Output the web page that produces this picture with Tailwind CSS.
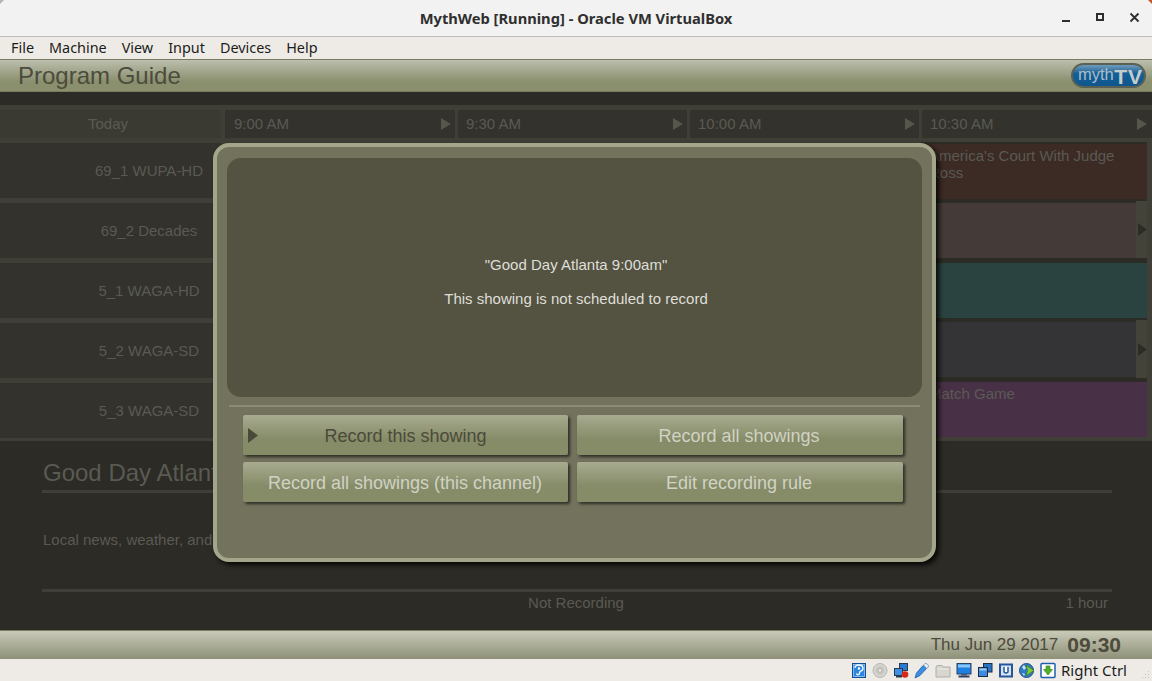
<!DOCTYPE html>
<html><head><meta charset="utf-8"><script src="https://cdn.jsdelivr.net/npm/@tailwindcss/browser@4"></script></head>
<body class="w-[1152px] h-[681px] overflow-hidden font-['Liberation_Sans',sans-serif] bg-[#2c2b25]">
<div class="relative flex flex-col h-[681px]">
  <!-- window title -->
  <header class="h-[37px] shrink-0 flex items-center bg-[#f2f2f2] border-b border-[#bdbcb8] relative">
    <svg class="absolute left-0 top-0" width="5" height="5" viewBox="0 0 5 5"><path d="M0 0h4L0 4z" fill="#b5b5b2"/></svg>
    <svg class="absolute right-0 top-0" width="5" height="5" viewBox="0 0 5 5"><path d="M1 0h4v4z" fill="#c4562c"/></svg>
    <div class="flex-1 text-center text-[14.7px] leading-[20px] pb-[1px] font-bold text-[#2f2f2f] font-['Noto_Sans',sans-serif]">MythWeb [Running] - Oracle VM VirtualBox</div>
    <div class="absolute right-[12px] top-[12px] flex gap-[23px] items-center">
      <svg width="11" height="11" viewBox="0 0 11 11"><rect x="1" y="8" width="8" height="2" fill="#2e2e2e"/></svg>
      <svg width="11" height="11" viewBox="0 0 11 11"><rect x="2" y="2" width="6" height="6" fill="none" stroke="#2e2e2e" stroke-width="2"/></svg>
      <svg width="11" height="11" viewBox="0 0 11 11"><path d="M1.500 1.500l8 8M9.500 1.500l-8 8" stroke="#2e2e2e" stroke-width="1.800"/></svg>
    </div>
  </header>
  <!-- menu -->
  <nav class="h-[22px] shrink-0 flex items-center pl-[11px] pb-[1px] gap-[15px] bg-[#eeebe6] text-[14.4px] text-[#1c1c1c] font-['Noto_Sans',sans-serif]">
    <span>File</span><span>Machine</span><span>View</span><span>Input</span><span>Devices</span><span>Help</span>
  </nav>
  <!-- guest page header -->
  <div class="h-[33px] shrink-0 flex items-center justify-between pl-[18px] pr-[6px] bg-gradient-to-b from-[#bcbfad] to-[#8a8f6e] to-70% border-y border-[#7a7c62] text-[24px] text-[#4d4b3c]">
    <span>Program Guide</span>
    <div class="relative w-[75px] h-[25px] rounded-full bg-gradient-to-b from-[#6f9cb8] via-[#12609a] via-40% to-[#0f568c] border-2 border-[#5a6054] overflow-hidden">
      <span class="absolute left-[5px] top-[1px] text-[16.500px] leading-[16px] text-[#aebdc4]">myth</span>
      <span class="absolute right-[1px] top-[1px] text-[21px] leading-[21px] tracking-[1px] font-bold text-[#c6cdc9]">TV</span>
    </div>
  </div>
  <main class="flex-1 flex flex-col pt-[13px]">
    <!-- guide grid -->
    <section class="flex flex-col bg-[#403f37] pt-[4px] pb-[4px] text-[15px] text-[#5a5a54]">
      <div class="flex h-[29px] mb-[4px] gap-[3px] pt-[1px]">
        <div class="w-[221px] bg-[#3a3a33] flex items-center justify-center pr-[5px]">Today</div>
        <div class="w-[230px] ml-[1px] bg-[#33322c] flex items-center justify-between pl-[9px] pr-[4px]"><span>9:00 AM</span><svg width="10" height="12" viewBox="0 0 10 12"><path d="M0 0l10 6-10 6z" fill="#56564d"/></svg></div>
        <div class="w-[229px] bg-[#33322c] flex items-center justify-between pl-[8px] pr-[4px]"><span>9:30 AM</span><svg width="10" height="12" viewBox="0 0 10 12"><path d="M0 0l10 6-10 6z" fill="#56564d"/></svg></div>
        <div class="w-[229px] bg-[#33322c] flex items-center justify-between pl-[8px] pr-[4px]"><span>10:00 AM</span><svg width="10" height="12" viewBox="0 0 10 12"><path d="M0 0l10 6-10 6z" fill="#56564d"/></svg></div>
        <div class="flex-1 bg-[#33322c] flex items-center justify-between pl-[8px] pr-[5px]"><span>10:30 AM</span><svg width="10" height="12" viewBox="0 0 10 12"><path d="M0 0l10 6-10 6z" fill="#56564d"/></svg></div>
      </div>
      <div class="flex h-[60px] items-start">
        <div class="w-[221px] h-[55px] mt-[1px] pt-[2px] bg-[#33322c] flex items-center justify-center pl-[77px] mr-[700px]"><span class="whitespace-nowrap">69_1 WUPA-HD</span></div>
        <div class="w-[226px] h-[60px] bg-[#2c2b25] pt-[2px]"><div class="h-[55px] bg-[#3c2a24] pl-[8px] pt-[3px] leading-[17px] overflow-hidden">America's Court With Judge Ross</div></div>
      </div>
      <div class="flex h-[60px] items-start">
        <div class="w-[221px] h-[55px] mt-[1px] pt-[2px] bg-[#33322c] flex items-center justify-center pl-[77px] mr-[700px]"><span class="whitespace-nowrap">69_2 Decades</span></div>
        <div class="relative w-[226px] h-[60px] bg-[#2c2b25] pt-[1px]"><div class="h-[55px] bg-[#443a38]"></div>
          <div class="absolute right-0 top-[-1px] w-[11px] h-[57px] bg-[#43433a] flex items-center justify-end"><svg width="9" height="13" viewBox="0 0 9 13"><path d="M0 0l9 6.500-9 6.500z" fill="#2c2b25"/></svg></div></div>
      </div>
      <div class="flex h-[60px] items-start">
        <div class="w-[221px] h-[55px] mt-[1px] pt-[2px] bg-[#33322c] flex items-center justify-center pl-[77px] mr-[700px]"><span class="whitespace-nowrap">5_1 WAGA-HD</span></div>
        <div class="w-[226px] h-[60px] bg-[#2c2b25] pt-[1px]"><div class="h-[55px] bg-[#2b4340]"></div></div>
      </div>
      <div class="flex h-[60px] items-start">
        <div class="w-[221px] h-[55px] mt-[1px] pt-[2px] bg-[#33322c] flex items-center justify-center pl-[77px] mr-[700px]"><span class="whitespace-nowrap">5_2 WAGA-SD</span></div>
        <div class="relative w-[226px] h-[60px] bg-[#2c2b25]"><div class="h-[55px] bg-[#343436]"></div>
          <div class="absolute right-0 top-[-2px] w-[11px] h-[58px] bg-[#43433a] flex items-center justify-end"><svg width="9" height="13" viewBox="0 0 9 13"><path d="M0 0l9 6.500-9 6.500z" fill="#2c2b25"/></svg></div></div>
      </div>
      <div class="flex h-[55px] items-start">
        <div class="w-[221px] h-[55px] mt-[1px] pt-[2px] bg-[#33322c] flex items-center justify-center pl-[77px] mr-[700px]"><span class="whitespace-nowrap">5_3 WAGA-SD</span></div>
        <div class="w-[226px] h-[55px] bg-[#483146] pl-[8px] pt-[3px] leading-[17px]">Match Game</div>
      </div>
    </section>
    <!-- details -->
    <section class="flex-1 flex flex-col pl-[42px] pr-[40px] text-[#5a5a54]">
      <h2 class="text-[24px] leading-[28px] pl-[1px] pt-[18px] pb-[3px] border-b-[3px] border-[#403f37]">Good Day Atlanta</h2>
      <p class="text-[15px] leading-[18px] pl-[1px] pt-[38px]">Local news, weather, and</p>
      <div class="mt-[40px] border-t-[3px] border-[#403f37] pt-[2px] flex text-[15px] leading-[18px] relative">
        <span class="flex-1 text-center pr-[2px]">Not Recording</span>
        <span class="absolute right-[4px]">1 hour</span>
      </div>
    </section>
  </main>
  <!-- guest footer -->
  <div class="h-[29px] shrink-0 flex items-center justify-end gap-[9px] pr-[31px] bg-gradient-to-b from-[#c9cab8] to-[#8e9178] border-t border-[#7a7c62] text-[#4d4b3c]">
    <span class="text-[17px]">Thu Jun 29 2017</span><span class="text-[21px] font-bold">09:30</span>
  </div>
  <!-- status bar -->
  <footer class="relative h-[22px] shrink-0 flex items-center justify-end bg-[#eeebe6] pr-[25px] gap-[5px] text-[15px] text-[#1c1c1c] font-['Noto_Sans',sans-serif]">
    <div class="flex gap-[5px] items-center">
      <svg width="16" height="17" viewBox="0 0 16 17"><rect x="1.500" y="1.500" width="13" height="14" fill="#2a86e0" stroke="#134f96"/><rect x="2.500" y="2.500" width="11" height="12" fill="none" stroke="#a8d0f4" stroke-width=".7"/><path d="M4 6q0-3 4-3t4 3.500q0 2-3 3l-1 3q-2 1-2.500-1" fill="none" stroke="#fff" stroke-width="1.300"/><circle cx="8" cy="6.500" r="1.200" fill="#fff"/></svg>
      <svg width="16" height="17" viewBox="0 0 16 17"><circle cx="8" cy="8.500" r="7" fill="#d6d4ce" stroke="#bab8b1"/><circle cx="8" cy="8.500" r="4.500" fill="#c9c7c1"/><circle cx="8" cy="8.500" r="1.800" fill="#f2f1ee" stroke="#a8a6a0" stroke-width=".8"/></svg>
      <svg width="16" height="17" viewBox="0 0 16 17"><rect x="6.500" y="1.500" width="8" height="7" fill="#2a7ad4" stroke="#2b3a4a"/><rect x="1.500" y="6.500" width="8" height="7" fill="#3d90e4" stroke="#2b3a4a"/><rect x="3" y="14" width="6" height="1.500" fill="#2b3a4a"/><circle cx="12" cy="12.500" r="3.300" fill="#d8261c"/></svg>
      <svg width="16" height="17" viewBox="0 0 16 17"><path d="M1 16l1.500-5L9 3.500l3.500 3L6 13.500z" fill="#3f8de0" stroke="#1c5fae" stroke-width=".8"/><path d="M9.500 3l1.500-1.500q1-.5 2.500.8t.8 2.700L12.800 6.500z" fill="#e8eef4" stroke="#5f88b0" stroke-width=".7"/></svg>
      <svg width="16" height="17" viewBox="0 0 16 17"><path d="M1 5l1-1.500h5L8 5h7v10H1z" fill="#d8d6d0" stroke="#b0aea7"/><path d="M2 7h12" stroke="#eeece7"/></svg>
      <svg width="16" height="17" viewBox="0 0 16 17"><rect x="1" y="1.500" width="14" height="10.500" fill="#1f80e4" stroke="#2a4160"/><rect x="2" y="2.500" width="12" height="3" fill="#8cc4f4"/><rect x="5" y="12" width="6" height="1.500" fill="#4a5a6a"/><rect x="2.500" y="13.500" width="11" height="2" fill="#2a4160"/></svg>
      <svg width="16" height="17" viewBox="0 0 16 17"><rect x="6.500" y="1.500" width="8.500" height="8.500" fill="#2a74c8" stroke="#1e2c40"/><rect x="1.500" y="5.500" width="9" height="9" fill="#3d8ce0" stroke="#1e2c40"/><rect x="2.500" y="6.500" width="7" height="2" fill="#9ccaf2"/></svg>
      <svg width="16" height="17" viewBox="0 0 16 17"><rect x="1" y="1.500" width="14" height="14" fill="#24569c"/><rect x="3" y="3.500" width="10" height="10" fill="#d8e4f4"/><path d="M6 5v5q2 2 4 0V5" fill="#fff" stroke="#24569c" stroke-width="1.500"/></svg>
      <svg width="16" height="17" viewBox="0 0 16 17"><circle cx="7.500" cy="8.500" r="7" fill="#2e7bc8" stroke="#1c4f88"/><path d="M3 5l2-2 2 3-2 2zM3 11l3 1-1 2z" fill="#cfe2f4"/><path d="M7 3l8 5.500-8 5.500 1.500-5.500z" fill="#80c83c" stroke="#3c7a18" stroke-width=".8"/></svg>
      <svg width="16" height="17" viewBox="0 0 16 17"><rect x="1" y="1.500" width="14" height="14" rx="1" fill="#fff" stroke="#1f5fae" stroke-width="1.500"/><path d="M6 4h4v3.500h2.500L8 13 3.500 7.500H6z" fill="#4fb02c" stroke="#2a7a18" stroke-width=".6"/></svg>
    </div>
    <span>Right Ctrl</span>
    <svg class="absolute right-[2px] bottom-[2px]" width="9" height="9" viewBox="0 0 9 9"><path d="M7 1h1v1H7zM4 4h1v1H4zM7 4h1v1H7zM1 7h1v1H1zM4 7h1v1H4zM7 7h1v1H7z" fill="#c4c2bc"/></svg>
  </footer>
  <!-- modal -->
  <div class="absolute left-[213px] top-[143px] w-[723px] h-[419px] rounded-[16px] border-[4px] border-[#a3a68a] bg-[#73725d] shadow-[3px_3px_5px_rgba(0,0,0,0.85)] pt-[11px] px-[10px] flex flex-col">
    <div class="h-[239px] rounded-[14px] bg-[#545241] flex flex-col items-center justify-center pl-[3px] text-[15px] leading-[18px] text-[#dedfd8] gap-[16px]">
      <p class="mt-[9px]">"Good Day Atlanta 9:00am"</p>
      <p>This showing is not scheduled to record</p>
    </div>
    <div class="h-[2px] bg-[#8b8c74] mt-[8px] mx-[2px]"></div>
    <div class="grid grid-cols-[325px_326px] gap-x-[9px] gap-y-[7px] mt-[8px] ml-[16px] text-[18px] text-center text-[#d0d2c4]">
      <button class="relative h-[40px] pt-[2px] rounded-[2px] bg-gradient-to-b from-[#a8ab90] to-[#868c68] to-60% shadow-[2px_2px_3px_rgba(0,0,0,0.6)] text-[#4b4a3a]"><svg class="absolute left-[5px] top-[13px]" width="10" height="15" viewBox="0 0 10 15"><path d="M0 0l10 7.500L0 15z" fill="#4b4a3a"/></svg>Record this showing</button>
      <button class="h-[40px] pt-[2px] pr-[2px] rounded-[2px] bg-gradient-to-b from-[#a8ab90] to-[#868c68] to-60% shadow-[2px_2px_3px_rgba(0,0,0,0.6)]">Record all showings</button>
      <button class="h-[40px] pt-[2px] pr-[1px] rounded-[2px] bg-gradient-to-b from-[#a8ab90] to-[#868c68] to-60% shadow-[2px_2px_3px_rgba(0,0,0,0.6)]">Record all showings (this channel)</button>
      <button class="h-[40px] pt-[2px] pr-[2px] rounded-[2px] bg-gradient-to-b from-[#a8ab90] to-[#868c68] to-60% shadow-[2px_2px_3px_rgba(0,0,0,0.6)]">Edit recording rule</button>
    </div>
  </div>
</div>
</body></html>
